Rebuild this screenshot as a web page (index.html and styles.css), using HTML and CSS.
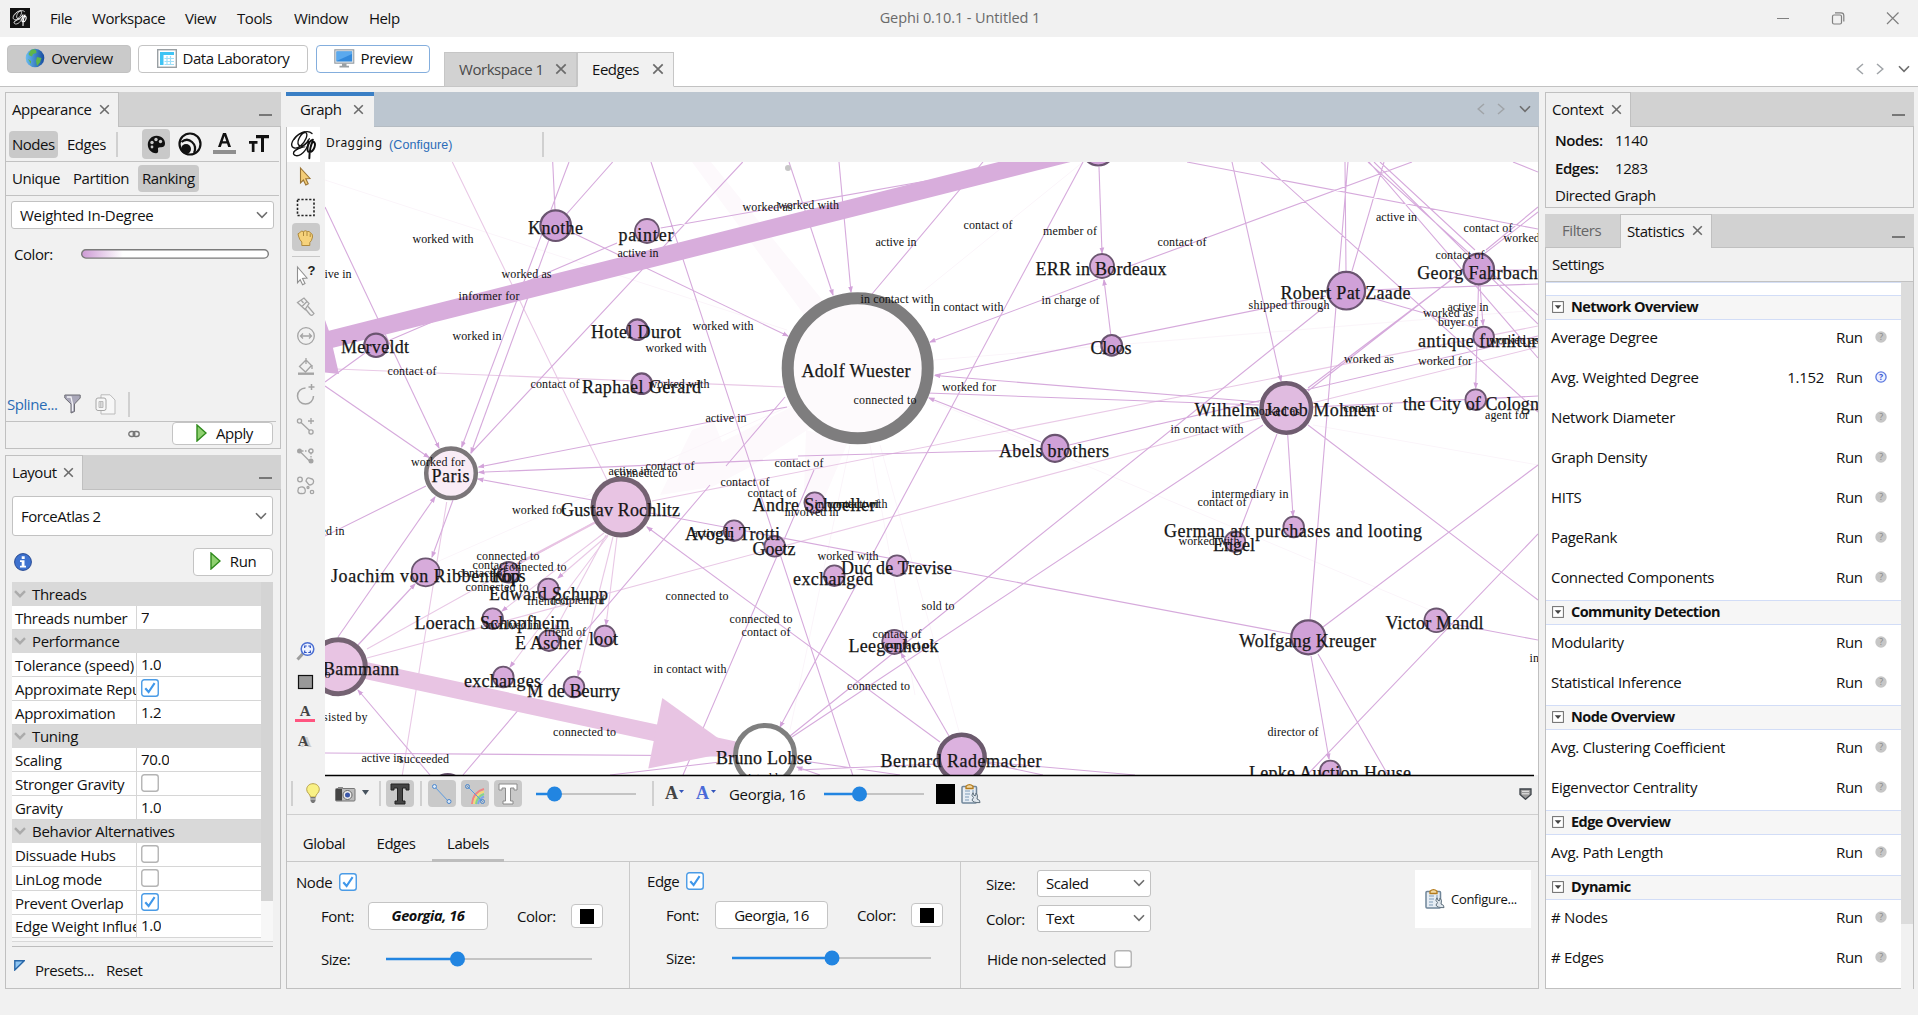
FILE: index.html
```html
<!DOCTYPE html>
<html lang="en">
<head>
<meta charset="utf-8">
<title>Gephi 0.10.1 - Untitled 1</title>
<link rel="stylesheet" href="styles.css">
</head>
<body>
<svg class="sprite" aria-hidden="true">
  <defs>
    <symbol id="x" viewBox="0 0 12 12"><path d="M1.3 1.3 10.7 10.7M10.7 1.3 1.3 10.7" stroke="#6b6b6b" stroke-width="1.7" fill="none"/></symbol>
    <symbol id="chev" viewBox="0 0 12 8"><path d="M1 1.2 6 6.4 11 1.2" stroke="#6e6e6e" stroke-width="1.6" fill="none"/></symbol>
    <symbol id="chevg" viewBox="0 0 12 8"><path d="M1 1.2 6 6.2 11 1.2" stroke="#ababab" stroke-width="2.4" fill="none"/></symbol>
    <symbol id="left" viewBox="0 0 8 12"><path d="M7 1 1.2 6 7 11" stroke="#a0a4a8" stroke-width="1.5" fill="none"/></symbol>
    <symbol id="right" viewBox="0 0 8 12"><path d="M1 1 6.8 6 1 11" stroke="#a0a4a8" stroke-width="1.5" fill="none"/></symbol>
    <symbol id="play" viewBox="0 0 11 18"><path d="M1 1 10 9 1 17Z" fill="#8fd070" stroke="#2f8a1c" stroke-width="1.4"/></symbol>
    <symbol id="check" viewBox="0 0 18 18"><rect x=".75" y=".75" width="16.5" height="16.5" rx="2.5" fill="#fff" stroke="#4a9be6" stroke-width="1.4"/><path d="M4.3 9.2 7.6 13 13.6 4.2" fill="none" stroke="#3f97ea" stroke-width="2.1"/></symbol>
    <symbol id="uncheck" viewBox="0 0 18 18"><rect x=".75" y=".75" width="16.5" height="16.5" rx="2.5" fill="#fff" stroke="#b4b4b4" stroke-width="1.4"/></symbol>
    <symbol id="gephi" viewBox="0 0 32 36"><g fill="none" stroke="currentColor" stroke-linecap="round"><path d="M25 5C20 0 7 5 3 14 0 21 6 24 12 19 18 14 21 6 18 4 14 3 7 13 10 18 13 22 20 15 21 12 22 20 14 31 7 30 2 29 4 24 10 22 16 20 20 15 22 11" stroke-width="1.5"/><path d="M5 12Q11 3 17 3M4 26Q10 20 17 20" stroke-width="1"/><path d="M26 12C20 14 18 26 22 26 27 26 31 16 26 14 24 16 22 25 22 33" stroke-width="2.2"/></g></symbol>
    <symbol id="clip" viewBox="0 0 20 20"><rect x="1" y="2.5" width="14.5" height="16.5" rx="1" fill="#e6edf4" stroke="#6f8599" stroke-width="1.5"/><path d="M4 7h5M4 10h5M4 13h4M4 16h4M11 7h2" stroke="#7d9bb8" stroke-width="1"/><path d="M5 4.5V2.2Q8.5-.8 12 2.2V4.5Z" fill="#f2d9a4" stroke="#b47b1c" stroke-width="1.3"/><path d="M12 8.5Q9.5 11.5 12.5 13.6L11 16Q12 19 19 18.6 19.5 16 16 15 17.5 11 15 9L14.7 11.7 13 11.4Z" fill="#dfe6ec" stroke="#5e6f7d"/></symbol>
    <symbol id="help" viewBox="0 0 12 12"><circle cx="6" cy="6" r="5.7" fill="#c6c6c6"/><text x="6" y="9.2" text-anchor="middle" font-size="9" fill="#888">?</text></symbol>
    <symbol id="helpb" viewBox="0 0 12 12"><circle cx="6" cy="6" r="5.1" fill="#eef1ff" stroke="#5b78e0" stroke-width="1.3"/><text x="6" y="9" text-anchor="middle" font-size="8.5" font-weight="bold" fill="#3553d0">?</text></symbol>
    <symbol id="fold" viewBox="0 0 12 12"><rect x=".6" y=".6" width="10.8" height="10.8" fill="#fff" stroke="#6b6b6b"/><path d="M2.7 4.3h6.6L6 8Z" fill="#444"/></symbol>
    <linearGradient id="ramp"><stop offset="0" stop-color="#cd9ad5"/><stop offset=".22" stop-color="#fff"/></linearGradient>
    <linearGradient id="globe" x1="0" x2="1"><stop offset="0" stop-color="#69bdf0"/><stop offset="1" stop-color="#164ca0"/></linearGradient>
    <marker id="tip" viewBox="0 0 6 6" refX="5" refY="3" markerWidth="6" markerHeight="6" orient="auto"><path d="M0 .8 6 3 0 5.2Z" fill="#d3a3da"/></marker>
  </defs>
</svg>

<header class="menubar">
  <span class="logo"><svg width="18" height="18"><use href="#gephi"/></svg></span>
  <nav class="menu"><span style="width:42px">File</span><span style="width:93px">Workspace</span><span style="width:52px">View</span><span style="width:57px">Tools</span><span style="width:75px">Window</span><span>Help</span></nav>
  <h1 class="title">Gephi 0.10.1 - Untitled 1</h1>
  <svg class="winctl" width="126" height="16" viewBox="0 0 126 16" fill="none" stroke="#808080" stroke-width="1.2"><path d="M2 8.5h12M112 2.500l11.500 11.500M123.500 2.500 112 14"/><rect x="57.500" y="5" width="9" height="9" rx="1.500"/><path d="M60 2.800h6q2.800 0 2.800 2.800v6"/></svg>
</header>

<section class="perspectives">
  <button class="persp on"><svg width="20" height="20"><circle cx="10" cy="10" r="9.300" fill="url(#globe)"/><path d="M6 2Q9 .500 11 2L11.500 5 8 6 7 8.500 4.500 7.500 3.500 6ZM12 9l4.500 1-1.500 4.500-3 3.500-1-5ZM3 11l3 2v3Z" fill="#5eb54a"/></svg>Overview</button>
  <button class="persp data"><svg width="20" height="19"><rect x=".700" y=".700" width="18.600" height="17.600" fill="#fff" stroke="#9aa0a4" stroke-width="1.400"/><path d="M3 3h14v3H3zM3 6h3.500v10H3z" fill="#3fc4f4"/><path d="M7.500 9.500H17M7.500 12.500H17M7.500 15.500H17M10 7v9M13.500 7v9" stroke="#9fdff8" stroke-width="1.200"/></svg>Data Laboratory</button>
  <button class="persp prev"><svg width="21" height="19"><rect x=".800" y=".800" width="19" height="13.400" fill="#dde2e6" stroke="#8f979d"/><rect x="2.500" y="2.500" width="15.600" height="10" fill="#3289dc"/><path d="M2.500 12 18 5V2.500H2.500Z" fill="#5aa9ee"/><path d="M8 14.500h4.500v2.200H15V18.500H5.500V16.700H8Z" fill="#9aa0a4"/></svg>Preview</button>
  <div class="wstabs"><div class="wstab">Workspace 1<svg width="12" height="12"><use href="#x"/></svg></div><div class="wstab cur">Eedges<svg width="12" height="12"><use href="#x"/></svg></div></div>
  <div class="wsnav"><svg width="8" height="12"><use href="#left"/></svg><svg width="8" height="12"><use href="#right"/></svg><svg width="12" height="8"><use href="#chev"/></svg></div>
</section>

<main class="desk">
  <aside class="left">
    <section class="panel appearance">
      <header class="tabs"><div class="tab" style="width:114px">Appearance<svg width="11" height="11"><use href="#x"/></svg></div><i class="min"></i></header>
      <div class="row elems">
        <b class="chip on" style="width:50px">Nodes</b><b class="chip" style="width:59px">Edges</b><i class="vs"></i>
        <span class="ico on"><svg width="19" height="19"><path d="M9.500.800C15 .800 18.300 4.500 18 9q-.500 3.500-4.500 3.200-3-.200-2.500 2 .800 3.800-2 4C4 18 .800 14 .800 9.500.800 5 4.500.800 9.500.800Z" fill="#111"/><g fill="#c9c9c9"><circle cx="5" cy="7.500" r="1.700"/><circle cx="9" cy="4.500" r="1.700"/><circle cx="13.500" cy="6.500" r="1.700"/><circle cx="5" cy="12" r="1.400"/></g></svg></span>
        <span class="ico"><svg width="24" height="24" fill="none" stroke="#111"><circle cx="12" cy="12" r="10.500" stroke-width="2.200"/><path d="M3.500 10Q9 5.500 14 10t2 11" stroke-width="2.200"/><circle cx="8" cy="17" r="5" fill="#111" stroke="none"/></svg></span>
        <span class="ico"><svg width="23" height="24"><path d="M5 15 10 1h3L18 15h-2.800L14 11.500H9L7.800 15ZM9.700 9.300h3.600L11.500 4Z" fill="#111"/><path d="M0 18h23v4H0z" fill="#8f8f8f"/></svg></span>
        <span class="ico"><svg width="20" height="18"><path d="M7 0h13v3.200h-5V17h-3V3.200H7ZM0 6h8.500v2.800h-3V17H2.800V8.800H0Z" fill="#111"/></svg></span>
      </div>
      <div class="row modes"><b class="chip">Unique</b><b class="chip">Partition</b><b class="chip on">Ranking</b></div>
      <div class="combo metric">Weighted In-Degree<svg width="12" height="8"><use href="#chev"/></svg></div>
      <div class="ramp">Color:<svg width="188" height="10"><rect x=".700" y=".700" width="186.600" height="8.400" rx="4.200" fill="url(#ramp)" stroke="#7b7b7b" stroke-width="1.400"/></svg></div>
      <div class="spline"><a>Spline...</a>
        <svg width="17" height="20"><path d="M.800 1h15.400v3L10.500 10v7.500L7 19V10L.800 4Z" fill="#aaa8ba" stroke="#6d6d74"/><path d="M3 3h4l1.500 7v7" stroke="#f2f2f6" stroke-width="1.300" fill="none"/></svg>
        <svg width="21" height="21" fill="#f7f7f7" stroke="#bbb"><path d="M6 .800h9L20 6v14H6Z"/><rect x="1" y="4" width="10" height="12.500" rx="2" stroke="#a6a6a6"/><path d="M4 7.500h4v6H4zM5.300 8v5M7 8v5"/></svg>
        <i class="vs"></i></div>
      <div class="apply"><svg width="12" height="8"><rect x=".800" y="1.500" width="6" height="5" rx="2.500" fill="none" stroke="#777" stroke-width="1.400"/><rect x="5.200" y="1.500" width="6" height="5" rx="2.500" fill="none" stroke="#777" stroke-width="1.400"/></svg><button class="btn"><svg width="11" height="18"><use href="#play"/></svg>Apply</button></div>
    </section>

    <section class="panel layout">
      <header class="tabs"><div class="tab" style="width:78px">Layout<svg width="11" height="11"><use href="#x"/></svg></div><i class="min"></i></header>
      <div class="combo algo">ForceAtlas 2<svg width="12" height="8"><use href="#chev"/></svg></div>
      <div class="runrow"><svg width="18" height="18"><circle cx="9" cy="9" r="8.400" fill="#3e72cf" stroke="#284a92"/><path d="M7.700 3.300h3v2.600h-3zM6 7.300h4.500v5.400H12v1.800H6v-1.800h1.700V9H6Z" fill="#fff"/></svg><button class="btn"><svg width="11" height="18"><use href="#play"/></svg>Run</button></div>
      <div class="props">
        <div class="ptable">
          <div class="cat"><svg width="12" height="8"><use href="#chevg"/></svg>Threads</div>
          <div class="prop"><span>Threads number</span><span>7</span></div>
          <div class="cat"><svg width="12" height="8"><use href="#chevg"/></svg>Performance</div>
          <div class="prop"><span>Tolerance (speed)</span><span>1.0</span></div>
          <div class="prop"><span>Approximate Repulsion</span><span><svg width="18" height="18"><use href="#check"/></svg></span></div>
          <div class="prop"><span>Approximation</span><span>1.2</span></div>
          <div class="cat"><svg width="12" height="8"><use href="#chevg"/></svg>Tuning</div>
          <div class="prop"><span>Scaling</span><span>70.0</span></div>
          <div class="prop"><span>Stronger Gravity</span><span><svg width="18" height="18"><use href="#uncheck"/></svg></span></div>
          <div class="prop"><span>Gravity</span><span>1.0</span></div>
          <div class="cat"><svg width="12" height="8"><use href="#chevg"/></svg>Behavior Alternatives</div>
          <div class="prop"><span>Dissuade Hubs</span><span><svg width="18" height="18"><use href="#uncheck"/></svg></span></div>
          <div class="prop"><span>LinLog mode</span><span><svg width="18" height="18"><use href="#uncheck"/></svg></span></div>
          <div class="prop"><span>Prevent Overlap</span><span><svg width="18" height="18"><use href="#check"/></svg></span></div>
          <div class="prop"><span>Edge Weight Influence</span><span>1.0</span></div>
        </div>
        <i class="thumb"></i>
      </div>
      <footer class="presets"><svg width="11" height="11"><path d="M.800.800h9.400L.800 10Z" fill="#8ec5f2" stroke="#2867a8" stroke-width="1.400"/></svg><span>Presets...</span><span>Reset</span></footer>
    </section>
  </aside>

  <section class="panel graph">
    <header class="gtabs"><div class="gtab">Graph<svg width="11" height="11"><use href="#x"/></svg></div><div class="gnav"><svg width="8" height="12"><use href="#left"/></svg><svg width="8" height="12"><use href="#right"/></svg><svg width="12" height="8"><use href="#chev"/></svg></div></header>
    <div class="status"><span class="glogo"><svg width="32" height="32"><use href="#gephi"/></svg></span><span class="drag">Dragging</span><a class="conf">(Configure)</a><i class="vs"></i></div>
    <div class="stage">
      <div class="tools">
        <svg width="38" height="612" viewBox="1 0 38 612">
          <path d="M14.500 6 24 16.500l-4.200.300 2.400 5-2.400 1.200-2.400-5-2.900 3Z" fill="#f4cd78" stroke="#9a7434" stroke-width="1.100"/>
          <rect x="11.500" y="37.500" width="16.500" height="16" fill="none" stroke="#222" stroke-width="1.600" stroke-dasharray="2.200 1.700"/>
          <rect x="6" y="61" width="28" height="28" rx="4" fill="#cacaca"/>
          <path d="M12.500 74q-1.500-3 1-3 1.500-3 4-1.500 2-1.500 3.700 0 2.500-.800 3.300 1.500 2.500.700 2 4-.700 4-2.700 5.500V83.500h-8V80q-2.300-2-3.300-6Z" fill="#f6d27b" stroke="#b08a3c"/><path d="M17.500 70v4M21 70v4M24.200 71.500V75" stroke="#b08a3c"/>
          <path d="M6 94.500h28" stroke="#c8c8c8"/>
          <path d="M11.500 105 21 116l-4.500.500 2.500 5-2.400 1.200-2.400-5-2.700 3Z" fill="#fff" stroke="#8f8f8f" stroke-width="1.100"/><text x="21.500" y="113" class="q">?</text>
          <g fill="none" stroke="#a4a4a4" stroke-width="1.300">
            <path d="M11.500 140.500 18 136l5 5.500-4 6ZM15 138l2.500 3M21 139.500l-5 5M22 144.500l6 7q-2 3-4 1l-5-6"/>
            <circle cx="20" cy="174" r="8.300"/><path d="M14.500 174h11M17 171.500 14.500 174 17 176.500M23 171.500 25.500 174 23 176.500"/>
            <path d="M20 196v6M13.500 204.500 20 198l5.500 5.500-6 6.500ZM26 203v4"/><path d="M12 211.700h16" stroke-width="2.400"/>
            <path d="M19.500 226a8 8 0 1 0 8 8M25.500 222v6M22.500 225h6" stroke-width="1.500"/>
            <circle cx="13.500" cy="259" r="2.100"/><circle cx="25" cy="270" r="2.100"/><path d="M15 260.500l8.500 8M25 256v6M22 259h6"/>
            <path d="M15 290.500l9 9"/><path d="M16 289h7M25 291v7" stroke-dasharray="1.500 1.500"/><circle cx="25" cy="289" r="2"/>
            <circle cx="14" cy="317.500" r="2.300"/><path d="M20 319q1-4.500 4.500-2.500 4.500 1 2.500 5-3.500 3-5 0ZM12.500 326q5-2.500 6.500 1 1.500 5-3.500 4.500-5 .500-3-5.500Z"/><circle cx="26" cy="330" r="1.700"/><circle cx="22" cy="325.500" r="1"/>
          </g>
          <circle cx="13.500" cy="289" r="2.500" fill="#a4a4a4"/><circle cx="25" cy="299" r="2.500" fill="#a4a4a4"/>
          <path d="M11.500 497.500 17 491.500" stroke="#9d9d9d" stroke-width="3"/><circle cx="21.500" cy="487" r="6.300" fill="#eef3ff" stroke="#4c6fd2" stroke-width="1.500"/><path d="M18.700 486v-2h2M24.300 486v-2h-2M18.700 488.500v2h2M24.300 488.500v2h-2" fill="none" stroke="#2b50c4" stroke-width="1.200"/>
          <rect x="12.500" y="513.500" width="14" height="13" fill="#999" stroke="#111" stroke-width="1.200"/>
          <text x="19" y="554" text-anchor="middle" class="ai">A</text><path d="M9 557h20v3H9z" fill="#ff5580"/>
          <text x="20" y="585" text-anchor="middle" class="ai sh">A</text><text x="17" y="584" text-anchor="middle" class="ai">A</text>
        </svg>
      </div>
      <svg class="canvas" width="1213" height="615" viewBox="325 162 1213 615">
        <g class="pale"><path d="M692 162h19L824 302 805 316ZM795 405l20 20-65 42-38 20-52 8 32-65 22-8 8 20ZM806 430l42 12-26 62-18-12Z"/></g>
        <g class="faint"><path d="M325 180 787 330M934 360 1538 310M850 445l-60 285M870 445l45 250M880 445l80 290M930 400 1430 610M1083 162 900 310M1313 425 1538 465M430 565 792 405"/></g>
        <g class="edge lite"><path d="M452.300 162 607 480M336 369 785 387M446.700 502 402.300 775M367 649 593 523M367 658 1260 418M652 501 1538 326M1312 403 1538 347"/></g>
        <g class="edge lite arr"><path d="M608 535 558 578"/><path d="M604 533 502 611"/><path d="M608 536 510 667"/><path d="M606 535 555 630"/><path d="M613 537 578 676"/><path d="M617 537 606 625"/></g>
        <path d="M596 522 515 565" stroke="#e8c4e3" stroke-width="2"/>
        <g class="edge"><path d="M552.700 162 555 210M612.700 162 556 226M651 162 852.700 775M742.700 162 471 453M660.700 228 1090 152M617 243 390 340M365 353 325 382M785 397 726 466M710 485 463 775M1027 450 798 456M650 513 1291 634M935 375 1326 296M927 393 1259 405M1069 445 1538 336M1127 267 1412 162M983 162 872 294M1187 162 1538 229M1261 162 1538 412M1345 162 1346 271M1348 162 1310 620M1384 162 1352 271M1368 162 1538 315M1374 162 1538 324M1369 162 1538 358M1380 162 1475 250M1513 162 1538 172M1538 207 1486 250M1538 212 1308 391M1451 280 1308 388M1368 290 1538 284M1365 296 1476 328M1494 270H1538M1328 304 790 736M1263 425 792 737M1277 434 1240 530M1308 425 1538 600M1323 627 1538 465M1538 534 1307 775M1448 623 1538 640M1318 654 1388 775M1313 407 1538 396M798 770 937 764M797 760 900 775M987 762 1135 775M987 763 1043 775M325 753 737 756M610 775 720 762M814 470 683 775M325 536 426 486"/></g>
        <g class="edge arr"><path d="M325 207 439 448"/><path d="M569 162 461.700 447"/><path d="M550 237 471 453"/><path d="M573 233 788 336"/><path d="M325 386 429 457.500"/><path d="M787 407 478.700 467"/><path d="M798 459 479 472.300"/><path d="M592 500 478 479"/><path d="M338 637 435 497"/><path d="M358 645 415 584"/><path d="M453 500 432 557"/><path d="M940 742 647 527"/><path d="M1259 402 935 375.500"/><path d="M1041 442 929 398"/><path d="M1098 279 930 342"/><path d="M1099 167 1102 253"/><path d="M1110.700 334 1104 280"/><path d="M1083 162 780 727"/><path d="M789 162 833 295"/><path d="M839 162 851 292"/><path d="M1232 162 1281 381"/><path d="M1480 285 1483 325"/><path d="M1478.500 285 1475.700 388"/><path d="M1287.700 435 1293 516"/><path d="M1311 656 1329 759"/><path d="M430 775 358 690"/><path d="M949 736 901 653"/><path d="M820 775 797 767"/></g>
        <path d="M1098 146 330 339.500" stroke="#d8addc" stroke-width="17.600"/><path d="M325 320 329 331 333 348 339 374 325 372.500Z" fill="#d8addc"/>
        <path d="M340 665 740 751" stroke="#e8c4e3" stroke-width="17"/><path d="M662.300 698 648.300 768.500 736 751Z" fill="#e8c4e3"/>
        <circle cx="788" cy="168" r="3" fill="#c6c6c6"/>
        <g class="node n1"><circle cx="555.700" cy="225.700" r="15.300"/><circle cx="1346.300" cy="290.700" r="18.800"/><circle cx="1478.700" cy="269" r="15.300"/><circle cx="1055" cy="448.300" r="13.500"/><circle cx="1308.300" cy="637.300" r="17"/><circle cx="1098.300" cy="149.500" r="16"/><circle cx="447.700" cy="790" r="16"/><circle cx="376" cy="345.300" r="11.700"/><circle cx="637.300" cy="329.700" r="10.300"/><circle cx="641.700" cy="383.700" r="10.300"/><circle cx="1111.700" cy="345.300" r="10.300"/></g>
        <g class="node n2"><circle cx="647" cy="231" r="12"/><circle cx="1102" cy="266" r="12"/><circle cx="894.300" cy="642" r="12"/><circle cx="1436.300" cy="620.300" r="11.800"/><circle cx="425.700" cy="572.300" r="14"/><circle cx="1483.700" cy="337" r="10.300"/><circle cx="1475.700" cy="399.700" r="10.300"/><circle cx="508.700" cy="572.300" r="10.300"/><circle cx="548.300" cy="589" r="10.300"/><circle cx="492.700" cy="618.700" r="10.300"/><circle cx="549" cy="640.700" r="10.300"/><circle cx="604.700" cy="636" r="10.300"/><circle cx="503.300" cy="677" r="10.300"/><circle cx="574" cy="687" r="10.300"/><circle cx="897" cy="565.700" r="10.300"/><circle cx="834.300" cy="575.700" r="10.300"/><circle cx="774.700" cy="546.300" r="10.300"/><circle cx="734" cy="530.700" r="10.300"/><circle cx="814.700" cy="502.700" r="10.300"/><circle cx="1293.700" cy="527" r="10.300"/><circle cx="1235" cy="541.700" r="10.300"/><circle cx="1330.300" cy="771" r="10.300"/></g>
        <g stroke-width="4.500"><circle cx="961.700" cy="757.700" r="23" fill="#dcb2df" stroke="#6b5a6d"/><circle cx="1286.300" cy="408" r="24.700" fill="#e0bbe0" stroke="#6f5c70"/><circle cx="621" cy="507" r="28" fill="#e8c4e3" stroke="#746272" stroke-width="5"/><circle cx="338.300" cy="666.700" r="27" fill="#e8c4e3" stroke="#746272" stroke-width="5"/><circle cx="451" cy="473.300" r="24.800" fill="#f9ecf6" stroke="#7b7679"/><circle cx="765" cy="755" r="29.500" fill="#fff" stroke="#7f7f7f" stroke-width="5"/><circle cx="857.700" cy="368.300" r="70" fill="#fdfafc" stroke="#7e7d7e" stroke-width="12"/></g>
        <g class="el">
          <text x="443" y="243" textLength="61">worked with</text><text x="331" y="278" textLength="41">active in</text><text x="526.500" y="278" textLength="50">worked as</text><text x="489" y="300" textLength="61">informer for</text><text x="477" y="340" textLength="49">worked in</text><text x="412" y="375" textLength="49">contact of</text><text x="638" y="257" textLength="41">active in</text><text x="723" y="330" textLength="61">worked with</text><text x="676" y="352" textLength="61">worked with</text><text x="555" y="388" textLength="49">contact of</text><text x="679" y="388" textLength="61">worked with</text><text x="726" y="421.500" textLength="41">active in</text><text x="767.500" y="211" textLength="50">worked as</text><text x="808.500" y="209" textLength="61">worked with</text><text x="896" y="246" textLength="41">active in</text><text x="988" y="228.500" textLength="49">contact of</text><text x="1070" y="234.500" textLength="54">member of</text><text x="1182" y="245.500" textLength="49">contact of</text><text x="897" y="303" textLength="73">in contact with</text><text x="967" y="310.500" textLength="73">in contact with</text><text x="1070.500" y="304" textLength="58">in charge of</text><text x="969" y="390.500" textLength="54">worked for</text><text x="885" y="404" textLength="63">connected to</text>
          <text x="1396.500" y="220.500" textLength="41">active in</text><text x="1488" y="231.500" textLength="49">contact of</text><text x="1534" y="242" textLength="61">worked with</text><text x="1460" y="258.500" textLength="49">contact of</text><text x="1289" y="308.500" textLength="81">shipped through</text><text x="1468" y="310.500" textLength="41">active in</text><text x="1448" y="317" textLength="50">worked as</text><text x="1458" y="325.500" textLength="40">buyer of</text><text x="1514" y="343.500" textLength="50">worked as</text><text x="1369" y="362.500" textLength="50">worked as</text><text x="1445" y="365" textLength="54">worked for</text><text x="1368" y="411.500" textLength="49">contact of</text><text x="1275" y="415" textLength="50">worked as</text><text x="1507" y="418.500" textLength="44">agent for</text><text x="1207" y="432.500" textLength="73">in contact with</text>
          <text x="438" y="465.500" textLength="54">worked for</text><text x="670" y="469.500" textLength="49">contact of</text><text x="629" y="474.500" textLength="41">active in</text><text x="646" y="476.500" textLength="63">connected to</text><text x="539" y="513.500" textLength="54">worked for</text><text x="320" y="534.500" textLength="49">worked in</text><text x="508" y="559.500" textLength="63">connected to</text><text x="497" y="569" textLength="49">contact of</text><text x="535" y="570.500" textLength="63">connected to</text><text x="482" y="577" textLength="49">contact of</text><text x="497" y="590.500" textLength="63">connected to</text><text x="548" y="604.500" textLength="42">friend of</text><text x="578" y="604" textLength="54">recipient of</text><text x="512" y="629" textLength="54">involved in</text><text x="565" y="635.500" textLength="42">friend of</text><text x="697" y="599.500" textLength="63">connected to</text><text x="761" y="622.500" textLength="63">connected to</text><text x="766" y="635.500" textLength="49">contact of</text><text x="690" y="672.500" textLength="73">in contact with</text><text x="340" y="720.500" textLength="55">assisted by</text><text x="584.500" y="735.500" textLength="63">connected to</text><text x="382" y="761.500" textLength="41">active in</text><text x="424" y="762.500" textLength="50">succeeded</text><text x="713" y="537" textLength="41">active in</text><text x="299" y="678" textLength="63">connected to</text>
          <text x="799" y="467" textLength="49">contact of</text><text x="745" y="485.500" textLength="49">contact of</text><text x="772" y="496.500" textLength="49">contact of</text><text x="811.500" y="515.500" textLength="54">involved in</text><text x="851" y="507.500" textLength="73">in contact with</text><text x="855" y="507.500" textLength="49">contact of</text><text x="848" y="559.500" textLength="61">worked with</text><text x="938" y="609.500" textLength="33">sold to</text><text x="897" y="637.500" textLength="49">contact of</text><text x="909" y="649" textLength="49">contact of</text><text x="878.500" y="689.500" textLength="63">connected to</text><text x="1250" y="498" textLength="77">intermediary in</text><text x="1222" y="506" textLength="49">contact of</text><text x="1209" y="545" textLength="61">worked with</text><text x="1293" y="735.500" textLength="51">director of</text><text x="1566" y="661.500" textLength="73">in contact with</text><text x="760" y="782" textLength="55">assisted by</text>
        </g>
        <g class="nl">
          <text x="555.500" y="233.500" textLength="55">Knothe</text><text x="646" y="240.500" textLength="55">painter</text><text x="375" y="353" textLength="68">Merveldt</text><text x="636" y="337.500" textLength="90">Hotel Durot</text><text x="641.500" y="393" textLength="119">Raphael Gerard</text><text x="856" y="377" textLength="109">Adolf Wuester</text><text x="1101" y="274.500" textLength="131">ERR in Bordeaux</text><text x="1111" y="353.500" textLength="41">Cloos</text><text x="1054" y="456.500" textLength="110">Abels brothers</text><text x="1345.500" y="299" textLength="130">Robert Pat Zaade</text><text x="1477.500" y="279" textLength="120.500">Georg Fahrbach</text><text x="1482" y="347" textLength="128">antique furniture</text><text x="1285" y="416" textLength="181">Wilhelm Jacob Mohnen</text><text x="1475" y="409.500" textLength="144">the City of Cologne</text><text x="450.500" y="481.500" textLength="38">Paris</text><text x="620.500" y="515.500" textLength="119">Gustav Rochlitz</text><text x="425.500" y="582" textLength="189">Joachim von Ribbentrop</text><text x="508.500" y="582" textLength="34">Kops</text><text x="548.500" y="599.500" textLength="119">Edward Schupp</text><text x="492" y="629" textLength="155">Loerach Schopfheim</text><text x="548.500" y="649" textLength="67">E Ascher</text><text x="603.500" y="644.500" textLength="29">loot</text><text x="502.500" y="687" textLength="77">exchanges</text><text x="573.500" y="697" textLength="93">M de Beurry</text><text x="361" y="674.500" textLength="76">Bammann</text><text x="764" y="764" textLength="96">Bruno Lohse</text><text x="961" y="766.500" textLength="161">Bernard Rademacher</text><text x="893.500" y="652" textLength="90">Leegenhoek</text><text x="896.500" y="574" textLength="111">Duc de Trevise</text><text x="833" y="585" textLength="80">exchanged</text><text x="774" y="554.500" textLength="43">Goetz</text><text x="732.500" y="540" textLength="95">Avogli Trotti</text><text x="814" y="511" textLength="123">Andre Schoeller</text><text x="1293" y="536.500" textLength="258">German art purchases and looting</text><text x="1234" y="551" textLength="42">Engel</text><text x="1307.500" y="647" textLength="137">Wolfgang Kreuger</text><text x="1434.500" y="629" textLength="98">Victor Mandl</text><text x="1330" y="779" textLength="162">Lepke Auction House</text>
        </g>
        <path d="M325 775H1538V777H325Z" fill="#f1f1f1"/><path d="M325 775.500H1534" stroke="#000" stroke-width="1.400"/>
      </svg>
    </div>
    <div class="vizbar">
      <i class="vs"></i>
      <svg width="14" height="21" style="margin:0 22px 0 13px"><path d="M7 .700C11 .700 13.300 3.500 13.300 6.500 13.300 10 9.800 11 9.500 14h-5C4.200 11 .700 10 .700 6.500.700 3.500 3 .700 7 .700Z" fill="#f9f186" stroke="#b6a04a"/><path d="M4.500 14h5v4L8 20H6l-1.500-2Z" fill="#777"/><path d="M4.500 16h5" stroke="#ddd"/></svg>
      <svg width="21" height="16" style="margin-left:-7px"><rect x=".500" y="2.500" width="19.500" height="12.500" rx="1" fill="#bcbcbc" stroke="#777"/><rect x="1" y="3" width="6" height="11.500" fill="#444"/><path d="M3 1h5v2H3z" fill="#888"/><circle cx="12.500" cy="9" r="4.500" fill="#eee" stroke="#666"/><circle cx="12.500" cy="9" r="2.500" fill="#3a56a8"/></svg>
      <svg width="7" height="5" style="margin:-2px 10px 0 6px"><path d="M0 0h7L3.500 5Z" fill="#48535e"/></svg>
      <i class="vs"></i>
      <span class="tg" style="margin-left:5px"><svg width="20" height="22"><path d="M1 1h18v6h-3V5h-3.500v13H15v3H5v-3h2.500V5H4v2H1Z" fill="#444" stroke="#222"/></svg></span><i class="vs" style="margin-left:6px"></i>
      <span class="tg" style="margin-left:6px"><svg width="22" height="22"><path d="M3 3 18 19" stroke="#5b9be0"/><g fill="#dbe9f8" stroke="#4a86cc"><circle cx="3.500" cy="3.500" r="2"/><circle cx="18" cy="18.500" r="2"/></g></svg></span>
      <span class="tg" style="margin-left:5px"><svg width="22" height="22" fill="none" stroke-width="2"><path d="M8 21Q9 9 20 6" stroke="#ef8585"/><path d="M10 21Q11 11 20 8.500" stroke="#f5d978"/><path d="M12 21Q13 13.500 20 11" stroke="#86d588"/><path d="M14 21Q15 16 20 13.500" stroke="#80a5ea"/><path d="M3 3 19 19" stroke="#5b9be0" stroke-width="1"/><circle cx="3.500" cy="3.500" r="2" stroke="#4a86cc" stroke-width="1"/><circle cx="18.500" cy="18.500" r="2" stroke="#4a86cc" stroke-width="1"/></svg></span>
      <span class="tg" style="margin-left:5px"><svg width="20" height="22"><path d="M1 1h18v6h-3V5h-3.500v13H15v3H5v-3h2.500V5H4v2H1Z" fill="#fff" stroke="#8a8a8a"/></svg></span>
      <svg class="sl" width="100" height="16" style="margin-left:14px"><path d="M0 8h100" stroke="#c4c4c4" stroke-width="2"/><path d="M0 8h18" stroke="#2285e1" stroke-width="2.500"/><circle cx="18.500" cy="8" r="7.500" fill="#2285e1"/></svg>
      <i class="vs" style="margin-left:16px"></i>
      <span class="fa" style="margin-left:11px">A</span><svg width="5" height="3" style="margin:-5px 12px 0 1px"><path d="M0 0h5L2.500 3Z" fill="#3355bb"/></svg>
      <span class="fa blue">A</span><svg width="5" height="3" style="margin:-5px 13px 0 1px"><path d="M0 0h5L2.500 3Z" fill="#3355bb"/></svg>
      <span class="fname">Georgia, 16</span>
      <svg class="sl" width="100" height="16"><path d="M0 8h100" stroke="#c4c4c4" stroke-width="2"/><path d="M0 8h35" stroke="#2285e1" stroke-width="2.500"/><circle cx="35.500" cy="8" r="7.500" fill="#2285e1"/></svg>
      <i class="black" style="margin-left:12px"></i><svg width="20" height="20" style="margin-left:6px"><use href="#clip"/></svg>
      <svg class="drawer" width="13" height="12"><path d="M1 1h11v5.500L6.500 11.300 1 6.500Z" fill="#999" stroke="#3c4248" stroke-width="1.300"/><path d="M3 3.300h7M3 5.800h7" stroke="#eee"/></svg>
    </div>
    <nav class="vtabs"><span>Global</span><span>Edges</span><span class="cur">Labels</span></nav>
    <div class="vset">
      <div class="vcol c1">
        <div class="vh">Node<svg width="18" height="18"><use href="#check"/></svg></div>
        <div class="vr f"><span class="lb">Font:</span><button class="fbtn bi" style="width:120px">Georgia, 16</button><span class="cl">Color:</span><button class="sw"><i></i></button></div>
        <div class="vr s"><span class="lb">Size:</span><svg width="206" height="16"><path d="M0 8h206" stroke="#c4c4c4" stroke-width="2.200"/><path d="M0 8h71" stroke="#2285e1" stroke-width="2.500"/><circle cx="71.500" cy="8" r="7.500" fill="#2285e1"/></svg></div>
      </div>
      <div class="vcol c2">
        <div class="vh">Edge<svg width="18" height="18"><use href="#check"/></svg></div>
        <div class="vr f"><span class="lb">Font:</span><button class="fbtn" style="width:113px">Georgia, 16</button><span class="cl">Color:</span><button class="sw"><i></i></button></div>
        <div class="vr s"><span class="lb">Size:</span><svg width="199" height="16"><path d="M0 8h199" stroke="#c4c4c4" stroke-width="2.200"/><path d="M0 8h100" stroke="#2285e1" stroke-width="2.500"/><circle cx="100" cy="8" r="7.500" fill="#2285e1"/></svg></div>
      </div>
      <div class="vcol c3">
        <div class="pair"><span>Size:</span><div class="combo sm">Scaled<svg width="12" height="8"><use href="#chev"/></svg></div></div>
        <div class="pair"><span>Color:</span><div class="combo sm">Text<svg width="12" height="8"><use href="#chev"/></svg></div></div>
        <div class="hide">Hide non-selected<svg width="18" height="18"><use href="#uncheck"/></svg></div>
      </div>
      <button class="configure"><svg width="20" height="20"><use href="#clip"/></svg>Configure...</button>
    </div>
  </section>

  <aside class="rightcol">
    <section class="panel context">
      <header class="tabs"><div class="tab" style="width:86px">Context<svg width="11" height="11"><use href="#x"/></svg></div><i class="min"></i></header>
      <dl><dt>Nodes:</dt><dd>1140</dd><dt>Edges:</dt><dd>1283</dd></dl><p>Directed Graph</p>
    </section>
    <section class="panel stats">
      <header class="tabs"><div class="tab off">Filters</div><div class="tab" style="width:92px">Statistics<svg width="11" height="11"><use href="#x"/></svg></div><i class="min"></i></header>
      <div class="settings">Settings</div>
      <div class="slist">
        <div class="items">
          <h2><svg width="12" height="12"><use href="#fold"/></svg>Network Overview</h2>
          <div class="it"><span>Average Degree</span><em></em><b>Run</b><svg width="12" height="12"><use href="#help"/></svg></div>
          <div class="it"><span>Avg. Weighted Degree</span><em>1.152</em><b>Run</b><svg width="12" height="12"><use href="#helpb"/></svg></div>
          <div class="it"><span>Network Diameter</span><em></em><b>Run</b><svg width="12" height="12"><use href="#help"/></svg></div>
          <div class="it"><span>Graph Density</span><em></em><b>Run</b><svg width="12" height="12"><use href="#help"/></svg></div>
          <div class="it"><span>HITS</span><em></em><b>Run</b><svg width="12" height="12"><use href="#help"/></svg></div>
          <div class="it"><span>PageRank</span><em></em><b>Run</b><svg width="12" height="12"><use href="#help"/></svg></div>
          <div class="it"><span>Connected Components</span><em></em><b>Run</b><svg width="12" height="12"><use href="#help"/></svg></div>
          <h2><svg width="12" height="12"><use href="#fold"/></svg>Community Detection</h2>
          <div class="it"><span>Modularity</span><em></em><b>Run</b><svg width="12" height="12"><use href="#help"/></svg></div>
          <div class="it"><span>Statistical Inference</span><em></em><b>Run</b><svg width="12" height="12"><use href="#help"/></svg></div>
          <h2><svg width="12" height="12"><use href="#fold"/></svg>Node Overview</h2>
          <div class="it"><span>Avg. Clustering Coefficient</span><em></em><b>Run</b><svg width="12" height="12"><use href="#help"/></svg></div>
          <div class="it"><span>Eigenvector Centrality</span><em></em><b>Run</b><svg width="12" height="12"><use href="#help"/></svg></div>
          <h2><svg width="12" height="12"><use href="#fold"/></svg>Edge Overview</h2>
          <div class="it"><span>Avg. Path Length</span><em></em><b>Run</b><svg width="12" height="12"><use href="#help"/></svg></div>
          <h2><svg width="12" height="12"><use href="#fold"/></svg>Dynamic</h2>
          <div class="it"><span># Nodes</span><em></em><b>Run</b><svg width="12" height="12"><use href="#help"/></svg></div>
          <div class="it"><span># Edges</span><em></em><b>Run</b><svg width="12" height="12"><use href="#help"/></svg></div>
        </div>
        <i class="thumb"></i>
      </div>
    </section>
  </aside>
</main>
</body>
</html>
```
FILE: styles.css
```css
* { box-sizing: border-box; }
body {
  margin: 0; width: 1918px; height: 1015px; overflow: hidden;
  background: #f1f1f1; color: #111;
  font: 15px/20px "Open Sans", "Noto Sans", sans-serif;
  letter-spacing: -0.45px;
  display: flex; flex-direction: column;
}
svg { display: block; flex: none; }
.sprite { position: absolute; width: 0; height: 0; }
button { font: inherit; letter-spacing: inherit; color: inherit; padding: 0; border: 1.5px solid #c4c4c4; border-radius: 4px; background: #fff; }
i { font-style: normal; flex: none; }
.vs { width: 2px; height: 25px; background: #d0d0d0; }

/* title bar */
.menubar { height: 37px; flex: none; display: flex; align-items: center; padding: 0 0 1px 10px; }
.logo { width: 20px; height: 20px; background: #111; color: #fff; display: grid; place-items: center; }
.menu { display: flex; margin-left: 20px; }
.title { margin: 0 0 0 480px; width: 160px; font-size: 14.5px; font-weight: 400; color: #6a6a6a; letter-spacing: -0.1px; white-space: nowrap; }
.winctl { margin-left: auto; margin-right: 17px; }

/* perspective bar */
.perspectives { height: 50px; flex: none; background: #fff; border-bottom: 1px solid #c2c2c2; display: flex; padding-left: 7px; }
.persp { height: 28px; margin-top: 8px; display: flex; align-items: center; justify-content: center; gap: 6px; padding-bottom: 2px; }
.persp.on { width: 124px; background: #cacaca; border-color: #c2c2c2; }
.persp.data { width: 170px; margin-left: 7px; }
.persp.prev { width: 114px; margin-left: 8px; border-color: #84aedd; }
.wstabs { display: flex; margin: 15px 0 -1px 14px; }
.wstab { width: 133px; height: 35px; background: #d2d2d2; border: 1px solid #c6c6c6; color: #4a4a4a; display: flex; align-items: center; justify-content: space-between; padding: 0 9px 1px 14px; }
.wstab.cur { width: 97px; background: #f1f1f1; border-bottom-color: #f1f1f1; color: #111; }
.wsnav { display: flex; align-items: center; gap: 12px; margin: 15px 8px 0 auto; height: 34px; }
.wsnav svg:last-child { margin-left: 2px; }

/* docking area */
.desk { display: flex; padding: 5px 4px 0 5px; gap: 5px; height: 902px; }
.left { width: 276px; display: flex; flex-direction: column; gap: 6px; }
.rightcol { width: 370px; margin-left: 1px; display: flex; flex-direction: column; gap: 6px; }
.panel { border: 1px solid #c0c0c0; display: flex; flex-direction: column; min-height: 0; }
.tabs { height: 35px; flex: none; background: #d2d2d2; display: flex; align-items: stretch; border-bottom: 1px solid #c0c0c0; margin: -1px -1px 0; }
.tab { background: #f1f1f1; border: 1px solid #c0c0c0; border-bottom: 0; margin-bottom: -1px; display: flex; align-items: center; justify-content: space-between; padding: 0 8px 2px 6px; }
.tab.off { width: 75px; background: #d2d2d2; color: #666; padding-left: 16px; border-color: #d2d2d2; margin-bottom: 0; }
.min { width: 13px; height: 1.5px; background: #777; margin: 22px 9px 0 auto; }
.chip { font-weight: 400; height: 27px; border-radius: 4px; display: flex; align-items: center; justify-content: center; padding-bottom: 1px; }
.on { background: #c9c9c9; }

/* appearance */
.appearance { height: 357px; flex: none; }
.row { display: flex; align-items: center; border-bottom: 1px solid #c2c2c2; margin-right: 1px; flex: none; }
.elems { height: 35px; padding-left: 3px; }
.elems .vs { margin: 0 24px 0 1px; }
.ico { width: 29px; height: 30px; border-radius: 4px; display: grid; place-items: center; margin-right: 6px; }
.modes { height: 34px; }
.modes .chip { padding: 0 4px 1px; margin-left: 2px; margin-right: 3px; }
.combo { background: #fff; border: 1.5px solid #c2c2c2; border-radius: 3px; display: flex; align-items: center; justify-content: space-between; padding: 0 5px 1px 8px; }
.metric { height: 28px; margin: 5px 6px 0 5px; letter-spacing: -0.3px; }
.ramp { display: flex; align-items: center; gap: 28px; padding-left: 8px; margin-top: 16px; height: 18px; }
.spline { display: flex; align-items: center; margin-top: 126px; height: 30px; padding-left: 1px; }
.spline a { width: 57px; color: #2a6cb5; white-space: nowrap; }
.spline svg + svg { margin: 0 12px 0 14px; }
.apply { border-top: 1px solid #c2c2c2; margin: 2px 4px 0 0; padding: 0 3px 0 0; display: flex; align-items: center; justify-content: flex-end; gap: 32px; }
.btn { height: 23px; width: 101px; display: flex; align-items: center; justify-content: center; gap: 9px; padding: 0 0 1px 4px; }

/* layout */
.layout { flex: 1; }
.algo { height: 40px; margin: 6px 7px 0 6px; flex: none; }
.runrow { display: flex; align-items: center; justify-content: space-between; margin: 11px 7px 0 8px; height: 29px; flex: none; }
.runrow .btn { width: 80px; height: 28px; padding: 0 0 1px; }
.props { display: flex; margin: 6px 7px 0 6px; height: 360px; background: #f7f7f7; border-bottom: 1px solid #d8d8d8; flex: none; }
.props .thumb { width: 12px; height: 319px; background: #d4d4d4; }
.ptable { width: 249px; letter-spacing: -0.3px; }
.cat, .prop { height: 23.75px; display: flex; align-items: center; white-space: nowrap; }
.cat { background: #d9d9d9; gap: 6px; padding-left: 2px; }
.prop { background: #fff; border-bottom: 1px solid #d6d6d6; }
.prop span { overflow: hidden; height: 100%; display: flex; align-items: center; }
.prop span:first-child { width: 125px; border-right: 1px solid #d6d6d6; padding-left: 3px; padding-top: 1px; }
.prop span + span { padding: 0 0 1px 4px; }
.presets { border-top: 1px solid #bdbdbd; margin: 4px 7px 0 6px; display: flex; gap: 12px; padding: 13px 0 0 2px; }
.presets svg + span { margin-left: -2px; }

/* graph window */
.graph { width: 1253px; flex: none; }
.gtabs { height: 35px; flex: none; background: #bcc6d0; border-bottom: 1px solid #b5bcc3; display: flex; justify-content: space-between; margin: -1px -1px 0; }
.gtab { width: 88px; background: #f1f1f1; border-top: 4px solid #3a7fc5; margin-bottom: -1px; padding: 0 10px 5px 14px; display: flex; align-items: center; justify-content: space-between; }
.gnav { display: flex; align-items: center; gap: 12px; padding-right: 8px; }
.gnav svg:last-child { margin-left: 2px; }
.status { height: 35px; flex: none; display: flex; align-items: center; }
.glogo { width: 33px; height: 35px; background: #fff; display: grid; place-items: center; }
.drag { margin: -3px 0 0 6px; width: 63px; font: 12px/18px "Noto Sans", sans-serif; letter-spacing: .45px; }
.conf { color: #2b6cb8; font: 12.5px "Liberation Sans", sans-serif; letter-spacing: .1px; width: 153px; }
.stage { display: flex; height: 615px; flex: none; }
.tools { width: 38px; flex: none; }
.canvas { background: #fff; }
.pale { fill: #fdf9fc; }
.faint { fill: none; stroke: #fbf5fa; }
.edge { fill: none; stroke: #d6aadc; stroke-width: 1.1; }
.lite { stroke: #e9c9e6; }
.arr path { marker-end: url(#tip); }
.node { stroke: #6a5470; stroke-width: 1.8; }
.n1 { fill: #d0a1d8; stroke-width: 2.2; }
.n2 { fill: #d7abdb; stroke: #6b5670; }
.el, .nl { font-family: "Liberation Serif", serif; text-anchor: middle; letter-spacing: 0; fill: #111; }
.el { font-size: 12px; }
.nl { font-size: 18px; fill: #161616; stroke: #161616; stroke-width: .25px; }
.q { font: bold 13px "Liberation Sans", sans-serif; fill: #222; }
.ai { font: bold 15px "Liberation Serif", serif; fill: #444; }
.ai.sh { fill: #ccc; }

/* visualization bar */
.vizbar { height: 38px; flex: none; border-bottom: 1.5px solid #cfcfcf; display: flex; align-items: center; padding: 0 6px 4px 4px; }
.tg { width: 28px; height: 27px; border-radius: 4px; background: #c9c9c9; display: grid; place-items: center; flex: none; }
.fa { font: bold 18px "Liberation Serif", serif; width: 13px; color: #444; }
.fa.blue { color: #4a6ad8; width: 14px; }
.fname { width: 95px; letter-spacing: -0.3px; }
.black { width: 19px; height: 20px; background: #000; }
.drawer { margin-left: auto; }
.vtabs { height: 47px; flex: none; border-bottom: 1px solid #c8c8c8; display: flex; padding-left: 1px; }
.vtabs span { width: 72px; text-align: center; padding-top: 18px; height: 47px; }
.vtabs span.cur { border-bottom: 3px solid #bdbdbd; }
.vset { display: flex; flex: 1; }
.vcol { border-right: 1px solid #cacaca; flex: none; }
.c1 { width: 343px; padding: 11px 0 0 9px; }
.c2 { width: 331px; padding: 10px 0 0 17px; }
.c3 { width: 200px; border: 0; padding: 8px 0 0 25px; }
.vh { display: flex; gap: 7px; height: 18px; align-items: center; }
.vr { display: flex; align-items: center; }
.f { margin-top: 11px; height: 28px; }
.s { margin-top: 20px; height: 18px; }
.lb { white-space: nowrap; flex: none; }
.c1 .lb { width: 72px; padding-left: 25px; }
.c2 .lb { width: 68px; padding-left: 19px; }
.c1 .s svg { margin-left: 18px; }
.c2 .s svg { margin-left: 17px; }
.fbtn { height: 28px; padding-bottom: 1px; }
.bi { font-weight: 700; font-style: italic; letter-spacing: -0.4px; font-size: 14.5px; }
.cl { width: 54px; margin-left: 29px; }
.sw { width: 32px; height: 24px; display: grid; place-items: center; }
.sw i { width: 14px; height: 15px; background: #000; }
.pair { display: flex; align-items: center; margin-bottom: 8px; }
.pair span { width: 51px; }
.sm { width: 114px; height: 27px; }
.hide { display: flex; align-items: center; gap: 8px; margin-top: 17px; padding-left: 1px; white-space: nowrap; }
.configure { margin: 8px 7px 0 auto; width: 116px; height: 58px; border: 0; border-radius: 0; display: flex; align-items: center; gap: 6px; padding-left: 10px; font-size: 13px; letter-spacing: -0.3px; }

/* right column */
.context { height: 116px; flex: none; }
.context dl { display: grid; grid-template-columns: 60px 1fr; row-gap: 8px; margin: 3px 0 0 9px; }
.context dt { font-weight: 600; }
.context dd { margin: 0; }
.context p { margin: 7px 0 0 9px; }
.stats { flex: 1; }
.stats .tabs { height: 34px; }
.settings { height: 34px; flex: none; border-bottom: 1px solid #c2c2c2; padding: 6px 0 0 6px; }
.slist { display: flex; flex: 1; background: #fff; min-height: 0; }
.slist .thumb { width: 12px; height: 642px; background: #dcdcdc; box-shadow: 0 66px 0 #f1f1f1; }
.items { flex: 1; padding-top: 12px; border-top: 1px solid #d5dff5; }
.items h2 { margin: 0; height: 25px; border: solid #d2ddf7; border-width: 1px 0; background: #f6f6f6; font-size: 14.5px; font-weight: 700; display: flex; align-items: center; gap: 7px; padding: 0 0 1px 6px; letter-spacing: -0.55px; }
.it { height: 40px; display: flex; align-items: center; padding: 0 14px 7px 5px; white-space: nowrap; letter-spacing: -0.3px; }
.it span { flex: 1; }
.it em { font-style: normal; margin-right: 12px; }
.it b { font-weight: 400; width: 39px; }
```
